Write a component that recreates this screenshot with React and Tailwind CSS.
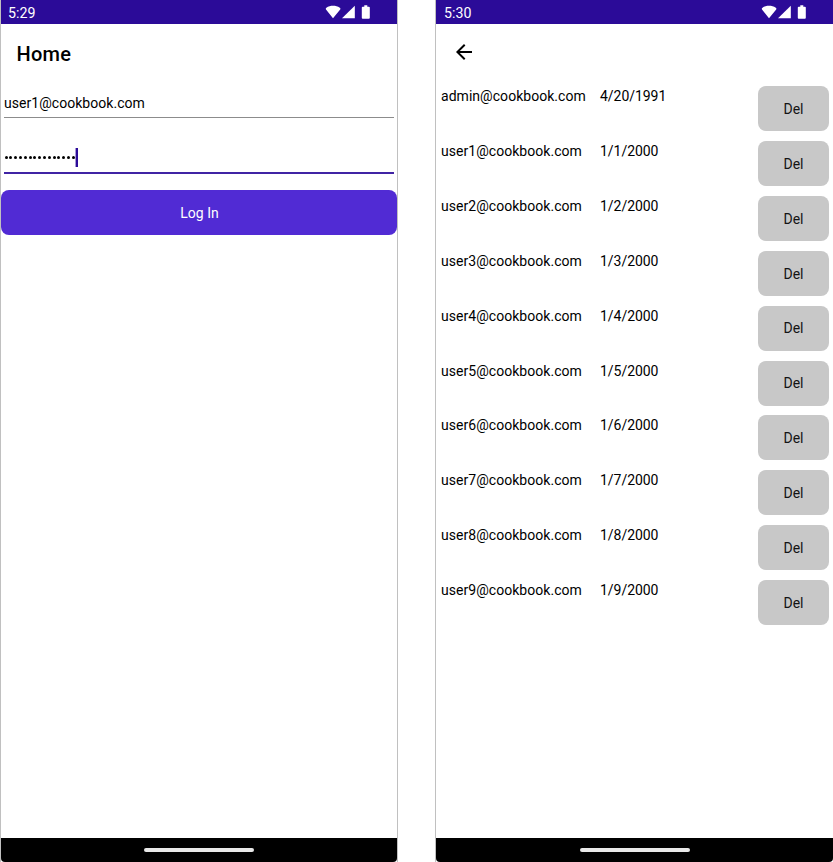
const rows = [
  ["admin@cookbook.com", "4/20/1991"],
  ["user1@cookbook.com", "1/1/2000"],
  ["user2@cookbook.com", "1/2/2000"],
  ["user3@cookbook.com", "1/3/2000"],
  ["user4@cookbook.com", "1/4/2000"],
  ["user5@cookbook.com", "1/5/2000"],
  ["user6@cookbook.com", "1/6/2000"],
  ["user7@cookbook.com", "1/7/2000"],
  ["user8@cookbook.com", "1/8/2000"],
  ["user9@cookbook.com", "1/9/2000"],
];

function StatusBar({ time, className }) {
  return (
    <div className={`flex h-6 shrink-0 items-center justify-between bg-[#2b0b98] text-white ${className}`}>
      <span className="pt-px text-[14.2px] leading-6">{time}</span>
      <svg width="46" height="24" viewBox="0 0 46 24" fill="#fff" aria-hidden="true">
        <path d="M8 18.2 L1 9.4 C0.6 8.8 0.8 8.2 1.4 7.8 C5.2 5.2 10.8 5.2 14.8 7.8 C15.4 8.2 15.6 8.8 15.2 9.4 Z" />
        <path d="M17 18.2 L29.8 5.8 V18.2 Z" />
        <path d="M39.3 5.3 h3 v1.4 h1.6 q.9 0 .9 .9 v10.2 q0 .9 -.9 .9 h-6.2 q-.9 0 -.9 -.9 v-10.2 q0 -.9 .9 -.9 h1.6 z" />
      </svg>
    </div>
  );
}

function NavBar() {
  return (
    <div className="flex h-6 shrink-0 items-center justify-center rounded-b-[4px] bg-black">
      <div className="h-1 w-[110px] rounded-full bg-[#e8e8e8]" />
    </div>
  );
}

function LoginScreen() {
  return (
    <section className="flex w-[398px] shrink-0 flex-col border-x border-[#c0c0c0] bg-white">
      <StatusBar time="5:29" className="pl-[7px] pr-[26px]" />
      <h1 className="h-[68px] pl-[15.4px] pt-[18px] text-[20px] font-medium leading-6 tracking-[0.3px]">Home</h1>
      <div className="mx-[3px] h-[26px] border-b border-[#8c8c8c] text-[14px] leading-[23px] tracking-[0.04px]">
        user1@cookbook.com
      </div>
      <div className="mx-[3px] mt-[28px] flex h-[28px] border-b-2 border-[#4024a4]">
        <div className="mt-[2px] flex h-[19px] items-center gap-[1.8px] pl-[0.6px]">
          {Array.from({ length: 15 }, (_, i) => (
            <span key={i} className="size-[3px] rounded-full bg-black" />
          ))}
        </div>
        <span className="mr-px mt-[2px] h-[19px] w-[3px] border-l border-[#a99ad6] bg-[#2b0b98]" />
      </div>
      <button className="mt-[16.4px] h-[44.6px] rounded-[8px] bg-[#512bd4] pt-[2px] pl-px text-[14px] tracking-[0.04px] text-white">Log In</button>
      <div className="grow" />
      <NavBar />
    </section>
  );
}

function UsersScreen() {
  return (
    <section className="ml-[37px] flex w-[398px] shrink-0 flex-col border-l border-[#c0c0c0] bg-white">
      <StatusBar time="5:30" className="pl-2 pr-[26px]" />
      <div className="h-[62.1px] shrink-0 pl-[16px] pt-[16px]">
        <svg width="24" height="24" viewBox="0 0 24 24" aria-hidden="true">
          <path d="M20 11H7.83l5.59-5.59L12 4l-8 8 8 8 1.41-1.41L7.83 13H20v-2z" />
        </svg>
      </div>
      <ul className="flex flex-col">
        {rows.map(([email, date]) => (
          <li key={email} className="flex h-[54.9px] items-start pl-[5px] text-[14px] leading-[21.4px]">
            <span className="w-[159px] tracking-[0.04px]">{email}</span>
            <span className="w-[158px] tracking-[-0.04px]">{date}</span>
            <button className="h-[45px] w-[71px] rounded-[8px] bg-[#c8c8c8] pt-[2px] text-[14px] text-[#141414]">Del</button>
          </li>
        ))}
      </ul>
      <div className="grow" />
      <NavBar />
    </section>
  );
}

export default function App() {
  return (
    <main className="flex h-[862px] w-[833px] overflow-hidden bg-white font-[Roboto,sans-serif] text-black">
      <LoginScreen />
      <UsersScreen />
    </main>
  );
}
